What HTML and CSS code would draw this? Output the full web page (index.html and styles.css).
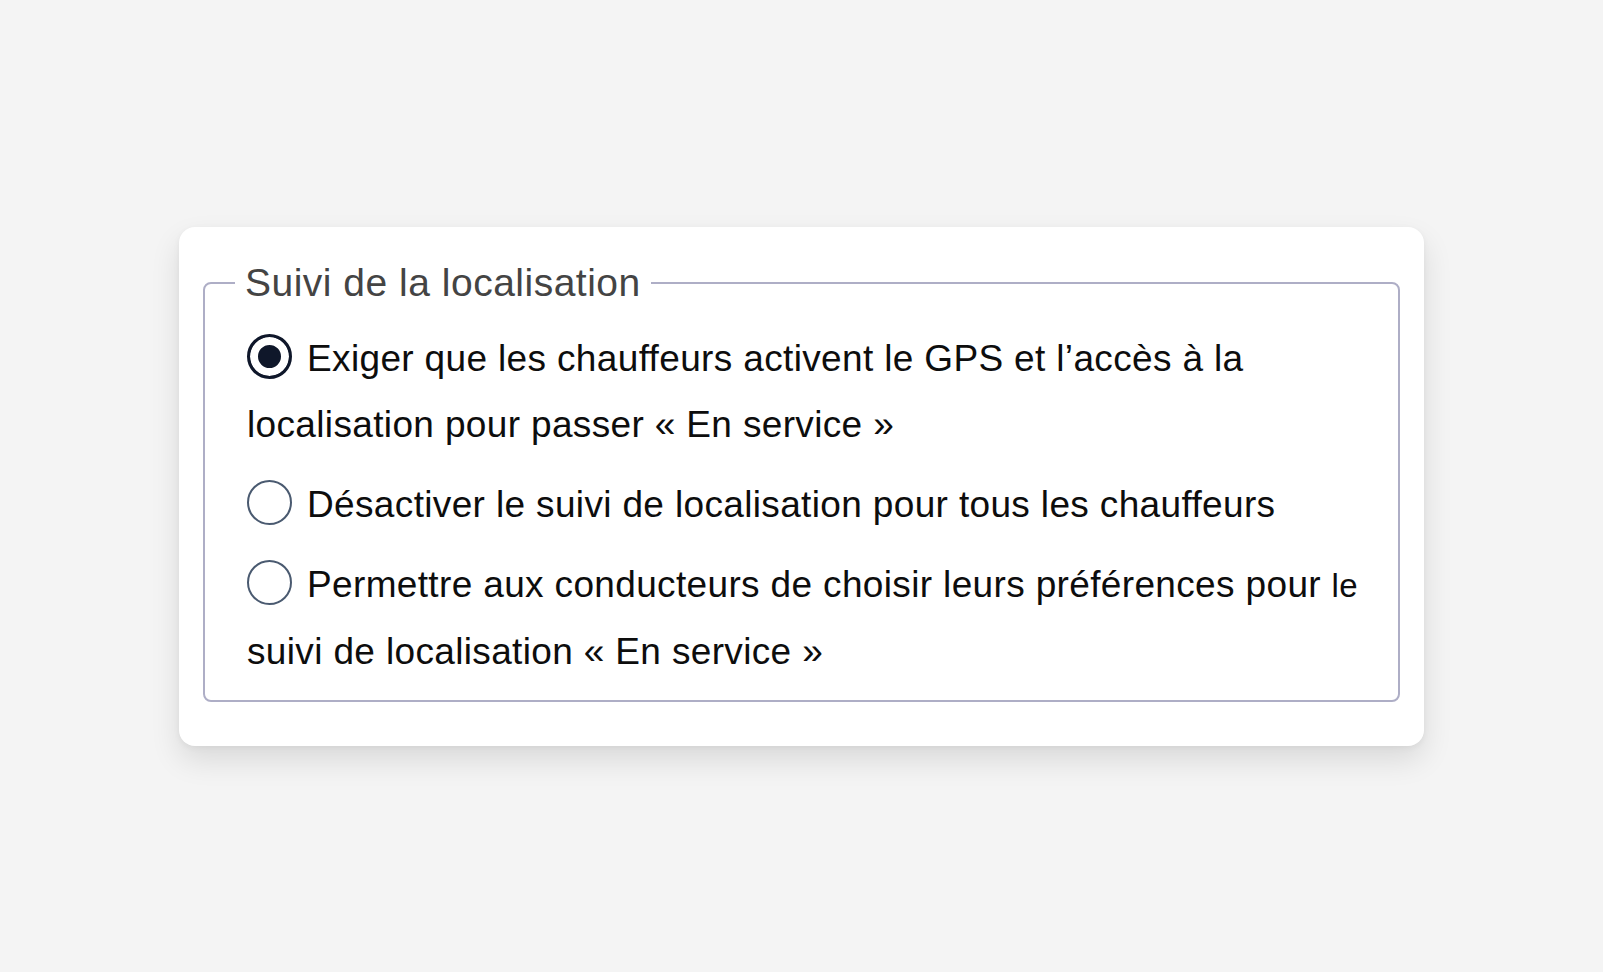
FILE: index.html
```html
<!DOCTYPE html>
<html lang="fr">
<head>
<meta charset="utf-8">
<title>Suivi de la localisation</title>
<link rel="stylesheet" href="styles.css">
</head>
<body>
  <main class="page">
    <section class="card">
      <fieldset class="group">
        <legend class="group-title">Suivi de la localisation</legend>
        <div class="options">
          <label class="option"><input class="radio" type="radio" name="tracking" value="required" checked>Exiger que les chauffeurs activent le GPS et l’accès à la localisation pour passer «&nbsp;En service&nbsp;»</label>
          <label class="option"><input class="radio" type="radio" name="tracking" value="off">Désactiver le suivi de localisation pour tous les chauffeurs</label>
          <label class="option"><input class="radio" type="radio" name="tracking" value="driver">Permettre aux conducteurs de choisir leurs préférences pour <span class="small-word">le</span> suivi de localisation «&nbsp;En service&nbsp;»</label>
        </div>
      </fieldset>
    </section>
  </main>
</body>
</html>
```
FILE: styles.css
```css
* {
  box-sizing: border-box;
}

html,
body {
  margin: 0;
  height: 100%;
}

body {
  background: #f4f4f4;
  font-family: "Liberation Sans", Arial, Helvetica, sans-serif;
  color: #111;
}

.page {
  min-height: 100%;
  display: flex;
  align-items: center;
  justify-content: center;
}

.card {
  width: 1245px;
  background: #fff;
  border-radius: 16px;
  padding: 34px 24px 44px;
  box-shadow: 0 14px 30px rgba(0, 0, 0, 0.11), 0 2px 6px rgba(0, 0, 0, 0.05);
}

.group {
  margin: 0;
  border: 2px solid #aeaec6;
  border-radius: 8px;
  padding: 21px 20px 15px 30px;
  min-width: 0;
}

.group-title {
  padding: 0 10px;
  font-size: 39px;
  line-height: 44px;
  letter-spacing: 0.5px;
  color: #444;
}

.options {
  display: flex;
  flex-direction: column;
  gap: 14px;
  margin-left: 12px;
}

.option {
  display: block;
  font-size: 37px;
  line-height: 66px;
  letter-spacing: 0.35px;
  color: #0d0d0d;
  cursor: pointer;
}

.radio {
  appearance: none;
  -webkit-appearance: none;
  display: inline-block;
  width: 45px;
  height: 45px;
  margin: 0 15px 0 0;
  border: 2.5px solid #4a5a70;
  border-radius: 50%;
  background: #fff;
  vertical-align: -8px;
  cursor: pointer;
}

.radio:checked {
  border: 3px solid #0f172a;
  background: #0f172a;
  box-shadow: inset 0 0 0 8px #fff;
}

.small-word {
  font-size: 33px;
}
```
